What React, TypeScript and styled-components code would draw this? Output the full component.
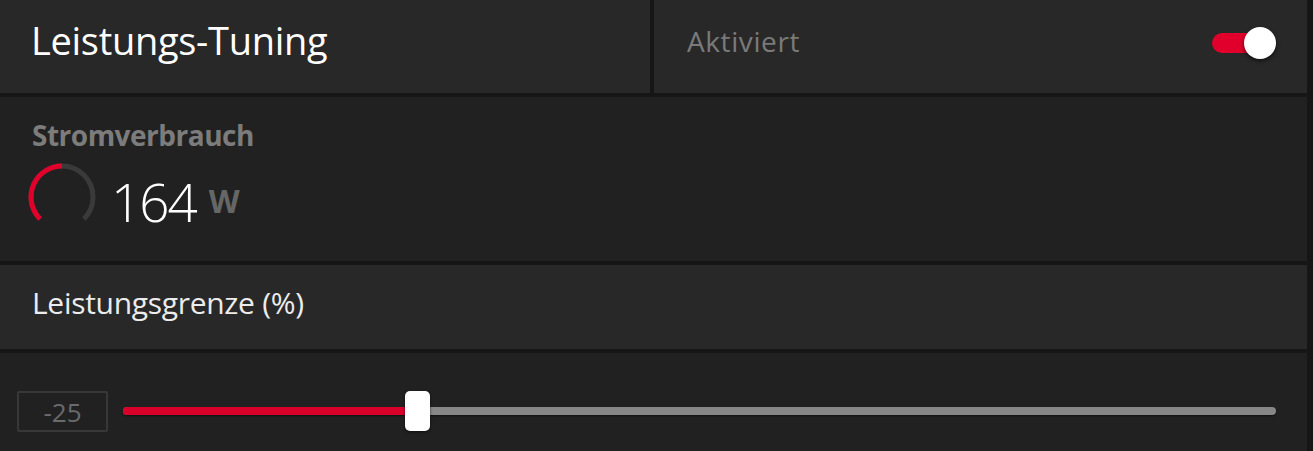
import React from "react";
import styled, { createGlobalStyle } from "styled-components";

const Global = createGlobalStyle`
  html, body { margin: 0; padding: 0; background: #161616; }
  body { font-family: "Open Sans", Lato, sans-serif; -webkit-font-smoothing: antialiased; }
  #root { width: 1313px; height: 451px; overflow: hidden; }
`;

const Page = styled.div`
  width: 1307px;
  height: 451px;
  display: flex;
  flex-direction: column;
  gap: 4px;
  background: #161616;
`;

const Header = styled.div`
  display: grid;
  grid-template-columns: 650px 1fr;
  gap: 4px;
  height: 93px;
  flex: none;
`;

const HeaderCell = styled.div<{ $pad: string }>`
  background: #282828;
  display: flex;
  align-items: flex-start;
  justify-content: space-between;
  padding: ${(p) => p.$pad};
  box-sizing: border-box;
`;

const Title = styled.h1`
  margin: 0;
  font-size: 38px;
  line-height: 1;
  font-weight: 400;
  color: #ffffff;
  letter-spacing: -0.3px;
`;

const StatusLabel = styled.span`
  font-size: 28px;
  line-height: 1;
  color: #7a7a7a;
  letter-spacing: 0.6px;
`;

const Toggle = styled.div`
  position: relative;
  width: 64px;
  height: 32px;
`;

const ToggleTrack = styled.div`
  position: absolute;
  left: 0;
  top: 6px;
  width: 52px;
  height: 20px;
  border-radius: 10px;
  background: #e0002b;
`;

const ToggleThumb = styled.div`
  position: absolute;
  right: 0;
  top: 0;
  width: 32px;
  height: 32px;
  border-radius: 50%;
  background: #ffffff;
  box-shadow: 0 2px 4px rgba(0, 0, 0, 0.6);
`;

const Section = styled.section<{ $bg: string; $h: number }>`
  background: ${(p) => p.$bg};
  height: ${(p) => p.$h}px;
  flex: none;
  box-sizing: border-box;
`;

const PowerSection = styled(Section)`
  padding: 24px 32px 0 27px;
  display: flex;
  flex-direction: column;
`;

const SubTitle = styled.div`
  font-size: 28px;
  line-height: 1;
  font-weight: 700;
  color: #7c7c7c;
  padding-left: 5px;
  letter-spacing: -0.5px;
`;

const Reading = styled.div`
  display: flex;
  align-items: flex-start;
  margin-top: 13px;
`;

const Value = styled.span`
  font-size: 53px;
  line-height: 1;
  font-weight: 300;
  color: #ffffff;
  margin: 13px 0 0 14px;
  letter-spacing: -2px;
`;

const Unit = styled.span`
  font-size: 32px;
  line-height: 1;
  font-weight: 700;
  color: #666666;
  margin: 23px 0 0 13px;
`;

const LabelSection = styled(Section)`
  padding: 23px 32px 0;
`;

const Label = styled.div`
  font-size: 30px;
  line-height: 1;
  color: #ececec;
  letter-spacing: -0.3px;
`;

const SliderSection = styled(Section)`
  display: flex;
  align-items: flex-start;
  padding: 37px 31px 0 17px;
  gap: 15px;
`;

const NumberBox = styled.div`
  width: 91px;
  height: 41px;
  box-sizing: border-box;
  border: 2px solid #383838;
  border-radius: 2px;
  display: flex;
  align-items: center;
  justify-content: center;
  font-size: 26px;
  color: #6a6a6a;
  margin-top: 1px;
`;

const Slider = styled.div`
  position: relative;
  flex: 1;
  height: 42px;
`;

const Track = styled.div`
  position: absolute;
  left: 0;
  right: 0;
  top: 17px;
  height: 8px;
  border-radius: 4px;
  background: #878787;
  box-shadow: 0 1px 2px rgba(0, 0, 0, 0.5);
`;

const Fill = styled.div`
  position: absolute;
  left: 0;
  top: 17px;
  height: 8px;
  border-radius: 4px 0 0 4px;
  background: #d8002b;
`;

const Thumb = styled.div`
  position: absolute;
  top: 1px;
  width: 25px;
  height: 40px;
  border-radius: 5px;
  background: #ffffff;
  box-shadow: 0 1px 3px rgba(0, 0, 0, 0.6);
`;

function Gauge({ pct }: { pct: number }) {
  const r = 31;
  const cx = 35;
  const cy = 35;
  const start = -135;
  const end = 135;
  const pt = (deg: number) => {
    const a = ((deg - 90) * Math.PI) / 180;
    return [cx + r * Math.cos(a), cy + r * Math.sin(a)];
  };
  const arc = (a0: number, a1: number) => {
    const [x0, y0] = pt(a0);
    const [x1, y1] = pt(a1);
    const large = a1 - a0 > 180 ? 1 : 0;
    return `M ${x0} ${y0} A ${r} ${r} 0 ${large} 1 ${x1} ${y1}`;
  };
  const mid = start + (end - start) * pct;
  return (
    <svg width="70" height="70" viewBox="0 0 70 70" style={{ flex: "none" }}>
      <path d={arc(start, end)} stroke="#3a3a3a" strokeWidth="5" fill="none" />
      <path d={arc(start, mid)} stroke="#e0002b" strokeWidth="5" fill="none" />
    </svg>
  );
}

export default function App() {
  const min = -50;
  const max = 50;
  const value = -25;
  const frac = (value - min) / (max - min);
  const thumbPos = `calc((100% - 25px) * ${frac})`;
  return (
    <>
      <Global />
      <Page>
        <Header>
          <HeaderCell $pad="21px 0 0 31px">
            <Title>Leistungs-Tuning</Title>
          </HeaderCell>
          <HeaderCell $pad="27px 31px 0 33px">
            <StatusLabel>Aktiviert</StatusLabel>
            <Toggle>
              <ToggleTrack />
              <ToggleThumb />
            </Toggle>
          </HeaderCell>
        </Header>
        <PowerSection $bg="#212121" $h={164}>
          <SubTitle>Stromverbrauch</SubTitle>
          <Reading>
            <Gauge pct={0.5} />
            <Value>164</Value>
            <Unit>W</Unit>
          </Reading>
        </PowerSection>
        <LabelSection $bg="#282828" $h={84}>
          <Label>Leistungsgrenze (%)</Label>
        </LabelSection>
        <SliderSection $bg="#212121" $h={98}>
          <NumberBox>-25</NumberBox>
          <Slider>
            <Track />
            <Fill style={{ width: `calc(${thumbPos} + 12px)` }} />
            <Thumb style={{ left: thumbPos }} />
          </Slider>
        </SliderSection>
      </Page>
    </>
  );
}
